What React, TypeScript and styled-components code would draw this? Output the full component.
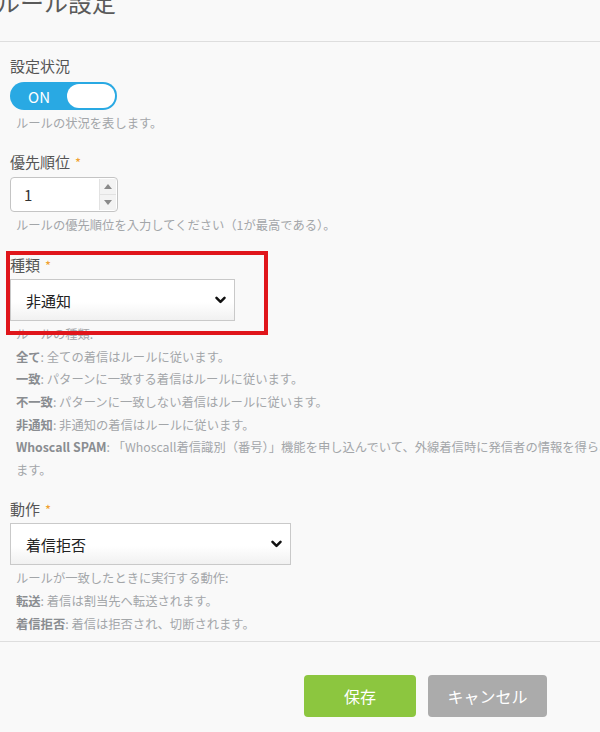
import React from "react";
import styled, { createGlobalStyle } from "styled-components";

const Global = createGlobalStyle`
  html, body { margin: 0; padding: 0; background: #f9f9f9; }
  body { overflow: hidden; font-family: "Noto Sans CJK JP", "Noto Sans", sans-serif; color: #555; }
  * { box-sizing: border-box; }
`;

const Page = styled.div`
  width: 600px;
  height: 732px;
  overflow: hidden;
  background: #f9f9f9;
`;

const Header = styled.header`
  height: 42px;
  border-bottom: 1px solid #dedede;
  overflow: hidden;
`;

const Title = styled.h1`
  margin: -15px 0 0 -4px;
  font-size: 24px;
  font-weight: 400;
  line-height: 34px;
  color: #5a5a5a;
`;

const Body = styled.div`
  width: 680px;
  padding: 14px 0 0 10px;
  display: flex;
  flex-direction: column;
`;

const Field = styled.section<{ $gap?: number }>`
  position: relative;
  display: flex;
  flex-direction: column;
  align-items: flex-start;
  margin-bottom: ${(p) => p.$gap ?? 18}px;
`;

const Label = styled.div`
  font-size: 15px;
  line-height: 20px;
  color: #555;
  margin-bottom: 6px;
`;

const Req = styled.span`
  color: #f0a030;
  margin-left: 5px;
  font-size: 13px;
`;

const Help = styled.div`
  margin-top: 2px;
  padding-left: 6px;
  font-size: 12.3px;
  line-height: 22.6px;
  color: #a3a6a9;
`;

const Key = styled.b`
  color: #8a8d91;
  font-weight: 700;
`;

const Toggle = styled.div`
  width: 107px;
  height: 28px;
  border-radius: 14px;
  background: #29a9e3;
  display: flex;
  align-items: center;
  justify-content: space-between;
  padding: 0 2px 0 18px;
`;

const ToggleText = styled.span`
  color: #fff;
  font-size: 15px;
  line-height: 1;
`;

const Knob = styled.span`
  width: 48px;
  height: 24px;
  border-radius: 12px;
  background: #fff;
`;

const NumberBox = styled.div`
  width: 108px;
  height: 35px;
  border: 1px solid #c4c4c4;
  border-radius: 4px;
  background: #fff;
  display: flex;
  align-items: stretch;
  margin-top: -2px;
`;

const NumberValue = styled.span`
  flex: 1;
  padding-left: 13px;
  font-size: 15px;
  line-height: 33px;
  color: #333;
`;

const Spinner = styled.div`
  width: 17px;
  margin: 1px 1px 1px 0;
  display: flex;
  flex-direction: column;
  background: #f3f3f3;
  border-left: 1px solid #e2e2e2;
`;

const SpinBtn = styled.div<{ $down?: boolean }>`
  flex: 1;
  display: flex;
  align-items: center;
  justify-content: center;
  ${(p) => (p.$down ? "border-top: 1px solid #e2e2e2;" : "")}
`;

const SelectBox = styled.div<{ $w: number }>`
  position: relative;
  width: ${(p) => p.$w}px;
  height: 42px;
  border: 1px solid #c9c9c9;
  background: linear-gradient(#ffffff, #ffffff 55%, #f1f1f1);
  display: flex;
  align-items: center;
  justify-content: space-between;
  padding: 0 8px 0 15px;
  margin-top: -3px;
`;

const SelectText = styled.span`
  font-size: 15px;
  color: #222;
`;

const Highlight = styled.div`
  position: absolute;
  left: -4px;
  top: -4px;
  width: 262px;
  height: 84px;
  border: 4px solid #e0161b;
  pointer-events: none;
`;

const Footer = styled.footer`
  border-top: 1px solid #dedede;
  margin-top: 6px;
  padding: 33px 0 0 304px;
  display: flex;
  gap: 12px;
`;

const Button = styled.button<{ $bg: string; $w: number }>`
  width: ${(p) => p.$w}px;
  height: 42px;
  border: none;
  border-radius: 4px;
  background: ${(p) => p.$bg};
  color: #fff;
  font-family: inherit;
  font-size: 16px;
  cursor: pointer;
`;

const Chevron = () => (
  <svg width="11" height="8" viewBox="0 0 11 8">
    <path d="M1.5 1.8 L5.5 5.8 L9.5 1.8" fill="none" stroke="#111" strokeWidth="2.5" strokeLinecap="round" strokeLinejoin="round" />
  </svg>
);

const Tri = ({ down }: { down?: boolean }) => (
  <svg width="8" height="5" viewBox="0 0 8 5">
    <path d={down ? "M0 0 L8 0 L4 5 Z" : "M0 5 L8 5 L4 0 Z"} fill="#8a8a8a" />
  </svg>
);

export default function App() {
  return (
    <Page>
      <Global />
      <Header>
        <Title>ルール設定</Title>
      </Header>
      <Body>
        <Field $gap={17}>
          <Label>設定状況</Label>
          <Toggle>
            <ToggleText>ON</ToggleText>
            <Knob />
          </Toggle>
          <Help>ルールの状況を表します。</Help>
        </Field>

        <Field $gap={19}>
          <Label>
            優先順位<Req>*</Req>
          </Label>
          <NumberBox>
            <NumberValue>1</NumberValue>
            <Spinner>
              <SpinBtn>
                <Tri />
              </SpinBtn>
              <SpinBtn $down>
                <Tri down />
              </SpinBtn>
            </Spinner>
          </NumberBox>
          <Help>ルールの優先順位を入力してください（1が最高である）。</Help>
        </Field>

        <Field $gap={18}>
          <Highlight />
          <Label>
            種類<Req>*</Req>
          </Label>
          <SelectBox $w={225}>
            <SelectText>非通知</SelectText>
            <Chevron />
          </SelectBox>
          <Help>
            ルールの種類:
            <br />
            <Key>全て</Key>: 全ての着信はルールに従います。
            <br />
            <Key>一致</Key>: パターンに一致する着信はルールに従います。
            <br />
            <Key>不一致</Key>: パターンに一致しない着信はルールに従います。
            <br />
            <Key>非通知</Key>: 非通知の着信はルールに従います。
            <br />
            <Key>Whoscall SPAM</Key>: 「Whoscall着信識別（番号）」機能を申し込んでいて、外線着信時に発信者の情報を得られ
            <br />
            ます。
          </Help>
        </Field>

        <Field $gap={0}>
          <Label>
            動作<Req>*</Req>
          </Label>
          <SelectBox $w={281}>
            <SelectText>着信拒否</SelectText>
            <Chevron />
          </SelectBox>
          <Help>
            ルールが一致したときに実行する動作:
            <br />
            <Key>転送</Key>: 着信は割当先へ転送されます。
            <br />
            <Key>着信拒否</Key>: 着信は拒否され、切断されます。
          </Help>
        </Field>
      </Body>
      <Footer>
        <Button $bg="#8cc63f" $w={112}>保存</Button>
        <Button $bg="#ababab" $w={119}>キャンセル</Button>
      </Footer>
    </Page>
  );
}
